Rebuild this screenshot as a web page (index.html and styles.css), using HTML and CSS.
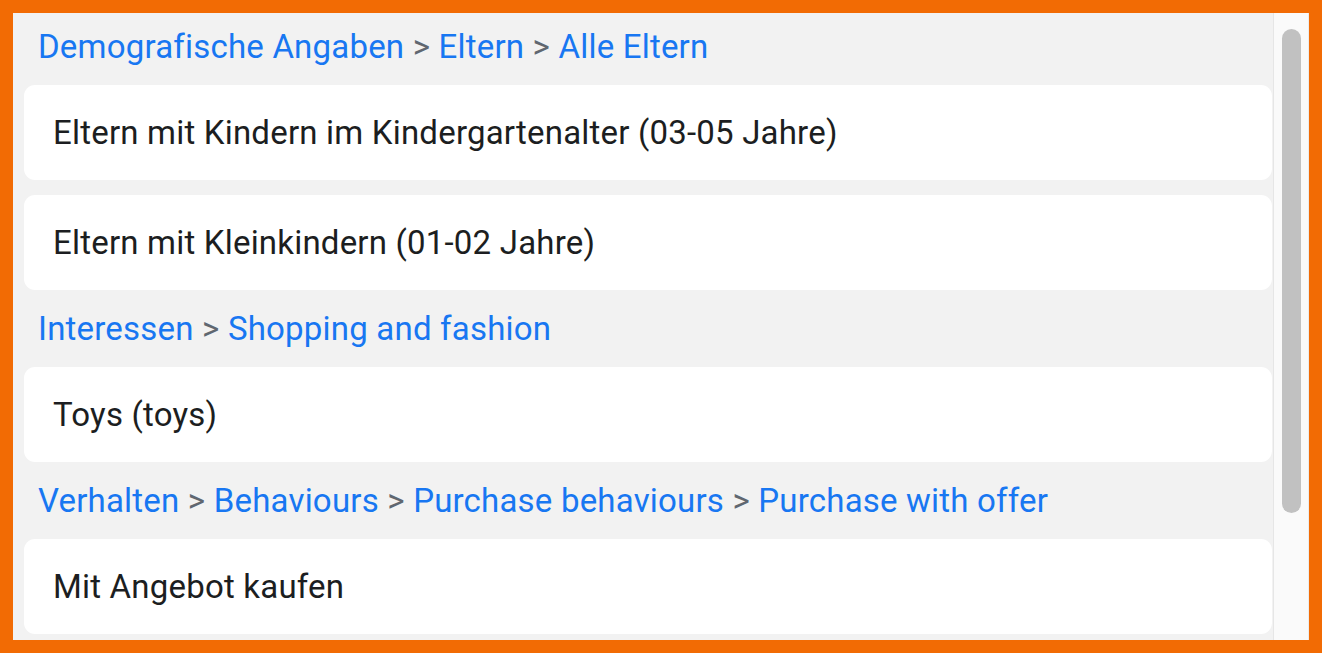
FILE: index.html
```html
<!DOCTYPE html>
<html lang="de">
<head>
<meta charset="utf-8">
<link rel="stylesheet" href="styles.css">
</head>
<body>
<div class="frame">
  <div class="panel">
    <div class="list">
      <div class="crumb"><span class="link">Demografische Angaben</span><span class="sep"> &gt; </span><span class="link">Eltern</span><span class="sep"> &gt; </span><span class="link">Alle Eltern</span></div>
      <div class="card">Eltern mit Kindern im Kindergartenalter (03-05 Jahre)</div>
      <div class="card">Eltern mit Kleinkindern (01-02 Jahre)</div>
      <div class="crumb"><span class="link">Interessen</span><span class="sep"> &gt; </span><span class="link">Shopping and fashion</span></div>
      <div class="card">Toys (toys)</div>
      <div class="crumb"><span class="link">Verhalten</span><span class="sep"> &gt; </span><span class="link">Behaviours</span><span class="sep"> &gt; </span><span class="link">Purchase behaviours</span><span class="sep"> &gt; </span><span class="link">Purchase with offer</span></div>
      <div class="card">Mit Angebot kaufen</div>
    </div>
    <div class="scrollbar"><div class="thumb"></div></div>
  </div>
</div>
</body>
</html>
```
FILE: styles.css
```css
html, body {
  margin: 0;
  padding: 0;
}
body {
  width: 1322px;
  height: 653px;
  overflow: hidden;
  font-family: Roboto, "Liberation Sans", sans-serif;
}
.frame {
  box-sizing: border-box;
  width: 1322px;
  height: 653px;
  background: #f26b04;
  padding: 13px 13px 13px 13px;
}
.panel {
  display: flex;
  height: 627px;
  background: #f2f2f2;
  overflow: hidden;
}
.list {
  flex: 1;
  display: flex;
  flex-direction: column;
  gap: 15px;
  padding: 10px 0 0 11px;
  margin-right: 1px;
  min-width: 0;
}
.crumb {
  height: 47px;
  line-height: 47px;
  padding-left: 14px;
  font-size: 33px;
  letter-spacing: 0.2px;
  white-space: nowrap;
}
.link {
  color: #1877f2;
}
.sep {
  color: #606770;
}
.card {
  flex: none;
  height: 95px;
  line-height: 95px;
  background: #ffffff;
  border-radius: 11px;
  padding-left: 29px;
  font-size: 33px;
  letter-spacing: 0.2px;
  color: #1c1e21;
  white-space: nowrap;
}
.scrollbar {
  flex: none;
  width: 36px;
  box-sizing: border-box;
  background: #fafafa;
  border-left: 1px solid #e6e6e6;
  border-right: 1px solid #ececec;
  padding: 16px 0 0 8px;
}
.thumb {
  width: 19px;
  height: 484px;
  border-radius: 10px;
  background: #c1c1c1;
}
```
